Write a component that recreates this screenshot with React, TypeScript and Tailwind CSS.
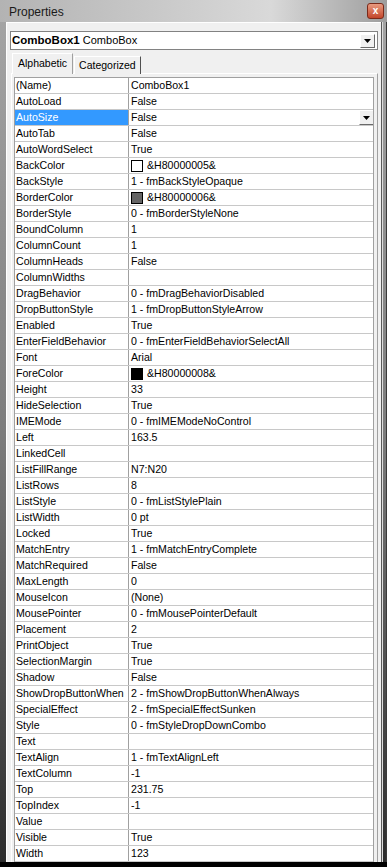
const rows: [string, string, string?][] = [
  ["(Name)", "ComboBox1"],
  ["AutoLoad", "False"],
  ["AutoSize", "False"],
  ["AutoTab", "False"],
  ["AutoWordSelect", "True"],
  ["BackColor", "&H80000005&", "white"],
  ["BackStyle", "1 - fmBackStyleOpaque"],
  ["BorderColor", "&H80000006&", "gray"],
  ["BorderStyle", "0 - fmBorderStyleNone"],
  ["BoundColumn", "1"],
  ["ColumnCount", "1"],
  ["ColumnHeads", "False"],
  ["ColumnWidths", ""],
  ["DragBehavior", "0 - fmDragBehaviorDisabled"],
  ["DropButtonStyle", "1 - fmDropButtonStyleArrow"],
  ["Enabled", "True"],
  ["EnterFieldBehavior", "0 - fmEnterFieldBehaviorSelectAll"],
  ["Font", "Arial"],
  ["ForeColor", "&H80000008&", "black"],
  ["Height", "33"],
  ["HideSelection", "True"],
  ["IMEMode", "0 - fmIMEModeNoControl"],
  ["Left", "163.5"],
  ["LinkedCell", ""],
  ["ListFillRange", "N7:N20"],
  ["ListRows", "8"],
  ["ListStyle", "0 - fmListStylePlain"],
  ["ListWidth", "0 pt"],
  ["Locked", "True"],
  ["MatchEntry", "1 - fmMatchEntryComplete"],
  ["MatchRequired", "False"],
  ["MaxLength", "0"],
  ["MouseIcon", "(None)"],
  ["MousePointer", "0 - fmMousePointerDefault"],
  ["Placement", "2"],
  ["PrintObject", "True"],
  ["SelectionMargin", "True"],
  ["Shadow", "False"],
  ["ShowDropButtonWhen", "2 - fmShowDropButtonWhenAlways"],
  ["SpecialEffect", "2 - fmSpecialEffectSunken"],
  ["Style", "0 - fmStyleDropDownCombo"],
  ["Text", ""],
  ["TextAlign", "1 - fmTextAlignLeft"],
  ["TextColumn", "-1"],
  ["Top", "231.75"],
  ["TopIndex", "-1"],
  ["Value", ""],
  ["Visible", "True"],
  ["Width", "123"],
];

function DropButton({ className }: { className?: string }) {
  return (
    <div
      className={`flex items-center justify-center bg-[#f0f0f0] border border-t-white border-l-white border-r-[#696969] border-b-[#696969] ${className ?? ""}`}
    >
      <svg width="7" height="4" viewBox="0 0 7 4">
        <path d="M0 0h7L3.5 4z" fill="#000" />
      </svg>
    </div>
  );
}

function Swatch({ color }: { color: string }) {
  const bg =
    color === "white" ? "bg-white" : color === "gray" ? "bg-[#646464]" : "bg-black";
  return <span className={`inline-block w-[12px] h-[12px] border border-black mr-[4px] ${bg}`} />;
}

export default function App() {
  return (
    <div
      className="w-[387px] h-[867px] overflow-hidden flex flex-col bg-linear-to-b from-[#a6a6a6] via-[#7c7c7c] to-[#2c2c2c] text-black"
      style={{ fontFamily: '"Liberation Sans", Arial, sans-serif' }}
    >
      {/* title bar */}
      <div className="h-[22px] shrink-0 flex items-center justify-between pl-[9px] pr-[3px] bg-linear-to-r from-[#b3b3b3] via-[#d9d9d9] via-70% to-[#9e9e9e]">
        <span className="text-[12px] text-[#1a1a1a] pt-[1px]">Properties</span>
        <div className="w-[17px] h-[16px] rounded-[3px] border border-[#7a2a1a] bg-linear-to-b from-[#e89a80] to-[#c2452a] flex items-center justify-center text-white text-[10px] font-bold leading-none">
          x
        </div>
      </div>

      <div className="flex-1 flex min-h-0">
        <div className="w-[6px] shrink-0" />
        {/* client area */}
        <div className="flex-1 bg-[#f0f0f0] border-t border-l border-white flex flex-col min-h-0">
          {/* object combo */}
          <div className="mt-[8px] ml-[3px] mr-[3px] h-[19px] bg-white border border-[#828282] flex items-center justify-between pl-[1px] pr-[2px]">
            <span className="text-[11px] leading-none">
              <b className="text-[11.5px]">ComboBox1</b> ComboBox
            </span>
            <DropButton className="w-[15px] h-[14px]" />
          </div>

          {/* tabs */}
          <div className="mt-[3px] ml-[5px] flex items-end h-[21px] relative z-10">
            <div className="h-[21px] px-[5px] bg-[#f0f0f0] border border-b-0 border-t-white border-l-white border-r-[#a0a0a0] flex items-center text-[10.5px]">
              Alphabetic
            </div>
            <div className="h-[18px] ml-[1px] px-[4px] bg-[#f0f0f0] border border-b-0 border-t-white border-l-white border-r-[#505050] flex items-center text-[10.5px]">
              Categorized
            </div>
          </div>

          {/* tab page */}
          <div className="ml-[4px] mr-[3px] -mt-[1px] flex-1 min-h-0 border border-t-white border-l-white border-r-[#a0a0a0] border-b-0 pl-[2px] pr-[3px] pt-[3px]">
            <div className="bg-white border border-[#a0a0a0] border-b-0 h-full overflow-hidden">
              {rows.map(([name, value, swatch], i) => {
                const sel = i === 2;
                return (
                  <div key={name} className="flex h-[16px] border-b border-[#c8c8c8] text-[10.6px] leading-[15px]">
                    <div
                      className={`w-[114px] shrink-0 pl-[1px] border-r border-[#a0a0a0] whitespace-nowrap overflow-hidden ${
                        sel ? "bg-[#3399ff] text-white" : ""
                      }`}
                    >
                      {name}
                    </div>
                    <div className="flex-1 pl-[2px] flex items-center justify-between whitespace-nowrap">
                      <span className="flex items-center">
                        {swatch && <Swatch color={swatch} />}
                        {value}
                      </span>
                      {sel && <DropButton className="w-[15px] h-[15px] -mr-[1px]" />}
                    </div>
                  </div>
                );
              })}
            </div>
          </div>
        </div>
        {/* right frame */}
        <div className="w-[6px] shrink-0 border-l border-[#5a5a5a] flex">
          <div className="w-[1px] bg-[#dcdcdc]" />
          <div className="flex-1" />
          <div className="w-[1px] bg-[#3a3a3a]" />
        </div>
      </div>
      <div className="h-[5px] shrink-0 bg-black" />
    </div>
  );
}
